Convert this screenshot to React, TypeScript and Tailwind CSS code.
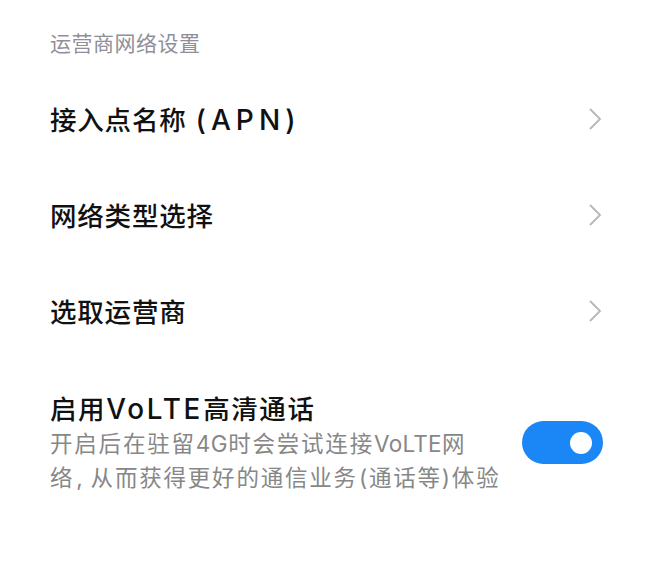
const font = { fontFamily: '"Noto Sans CJK SC", "Noto Sans", sans-serif' };
const latin = { fontFamily: 'Inter, "Noto Sans CJK SC", sans-serif' };

// Latin runs in the reference font are noticeably wider than Noto's
const L = ({ children, className = "" }: { children: string; className?: string }) => (
  <span className={className} style={latin}>
    {children}
  </span>
);

const Chevron = () => (
  <svg width="13" height="22" viewBox="0 0 13 22" fill="none" className="mr-[1px]">
    <polyline points="1.5,1.5 11,11 1.5,20.5" stroke="#b8b8b8" strokeWidth="1.8" strokeLinecap="round" strokeLinejoin="round" />
  </svg>
);

const rows = [
  <>
    接入点名称<L className="ml-[9px] text-[1.06em] tracking-[0.18em]">(APN)</L>
  </>,
  <>网络类型选择</>,
  <>选取运营商</>,
];

export default function App() {
  return (
    <div className="min-h-[563px] w-[650px] bg-white pl-[50px] pr-[47px]" style={font}>
      <div className="pt-[28px] text-[21px] leading-[28px] tracking-[0.5px] text-[#8f8f9a]">运营商网络设置</div>
      <div className="mt-[15px]">
        {rows.map((r, i) => (
          <div key={i} className="flex h-[96px] items-center justify-between">
            <span className="text-[26.5px] font-medium leading-[34px] tracking-[0.8px] text-[#111111]">{r}</span>
            <Chevron />
          </div>
        ))}
      </div>
      <div className="mt-[32px] flex items-center justify-between">
        <div>
          <div className="text-[26.5px] font-medium leading-[34px] tracking-[1.6px] text-[#111111]">
            启用<L className="text-[1.05em] tracking-[0.1em]">VoLTE</L>高清通话
          </div>
          <div className="whitespace-nowrap text-[22.5px] leading-[32px] tracking-[1.8px] text-[#878787]">
            开启后在驻留<L className="tracking-[0.5px]">4G</L>时会尝试连接<L className="tracking-[0.3px]">VoLTE</L>网
            <br />
            络<L className="ml-[2px] mr-[6px]">,</L>从而获得更好的通信业务<L className="ml-[1px]">(</L>通话等
            <L>)</L>体验
          </div>
        </div>
        <div className="flex h-[43px] w-[81px] shrink-0 items-center justify-end rounded-full bg-[#1b86f5] pr-[11px]">
          <div className="h-[22px] w-[22px] rounded-full bg-white" />
        </div>
      </div>
    </div>
  );
}
